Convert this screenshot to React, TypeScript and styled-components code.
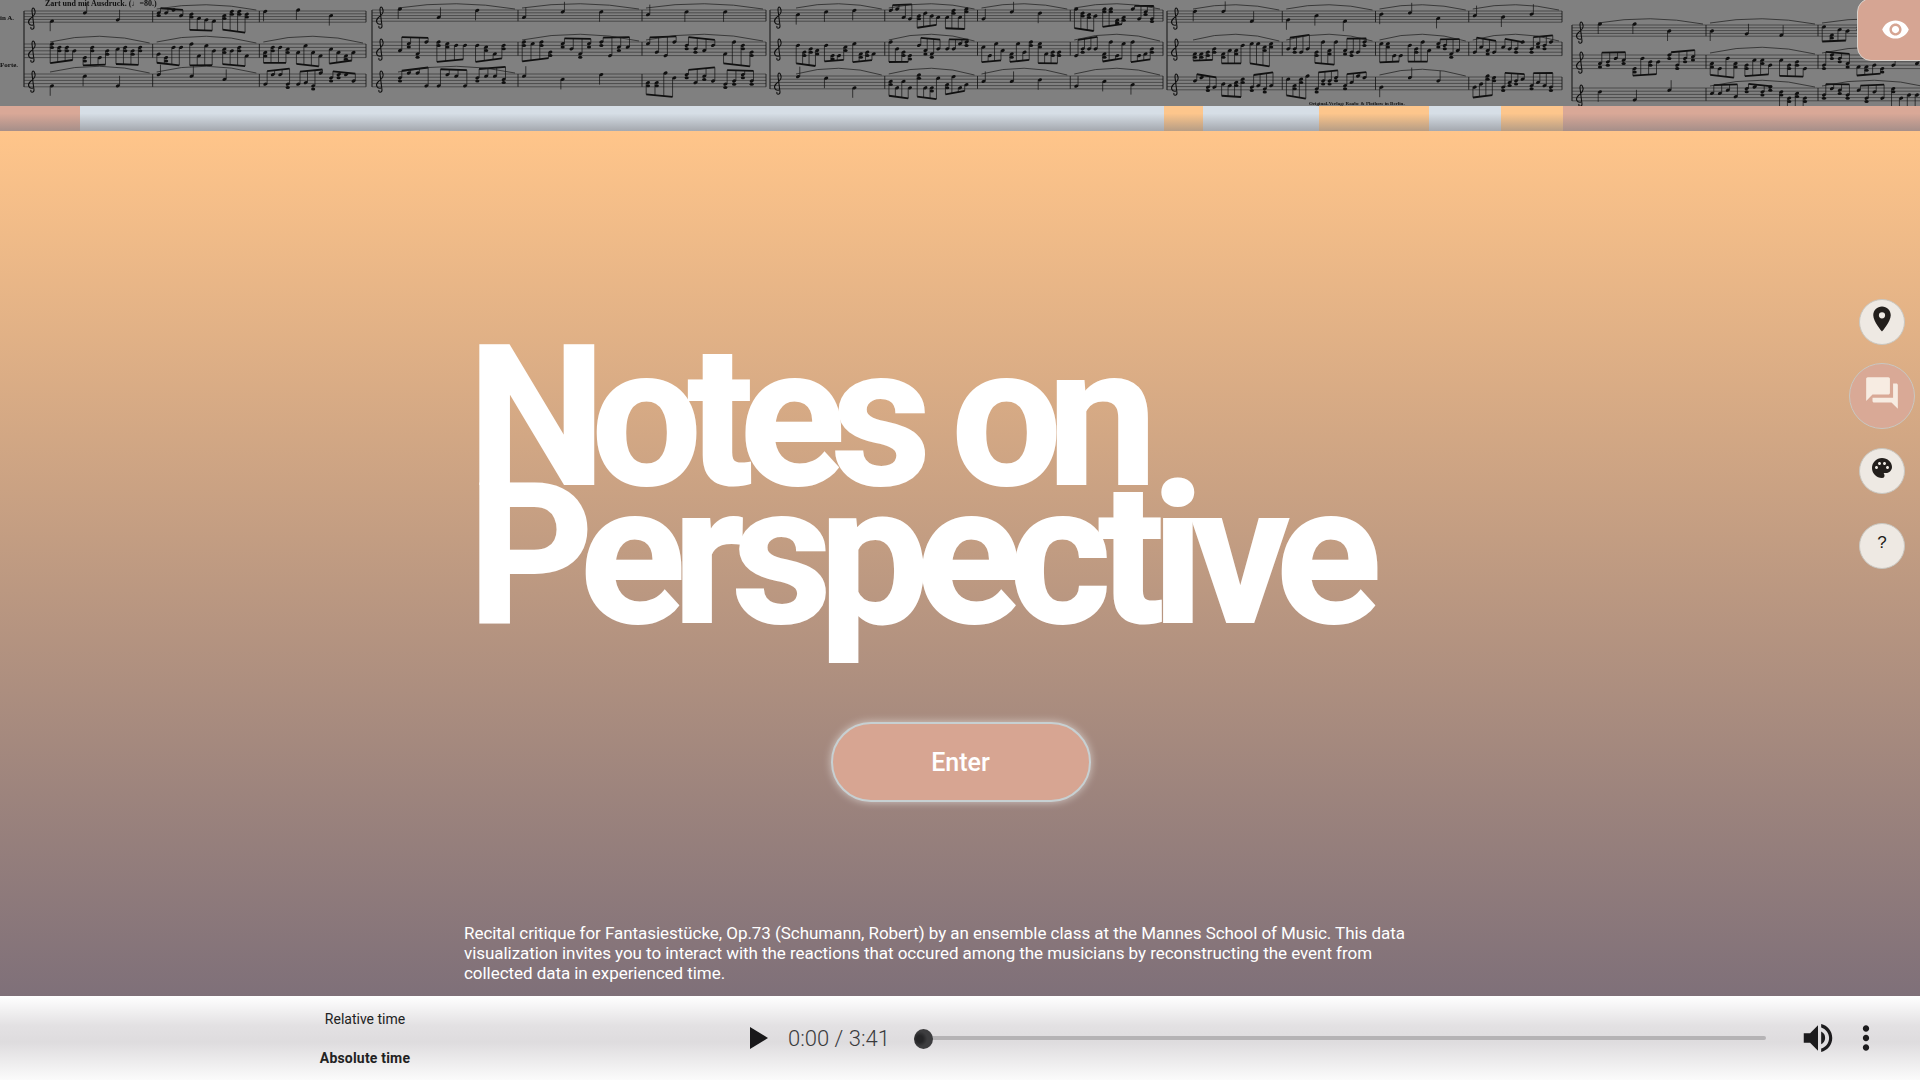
import React from "react";
import styled, { createGlobalStyle } from "styled-components";
import {
  MdLocationOn,
  MdMoreVert,
  MdPalette,
  MdQuestionAnswer,
  MdVisibility,
  MdVolumeUp,
} from "react-icons/md";

const GlobalStyle = createGlobalStyle`
  html, body {
    margin: 0;
    padding: 0;
    overflow: hidden;
  }
  body {
    font-family: Roboto, "Liberation Sans", sans-serif;
  }
`;

const Page = styled.div`
  position: relative;
  display: flex;
  flex-direction: column;
  width: 1920px;
  height: 1080px;
  overflow: hidden;
`;

const ScoreBand = styled.div`
  height: 106px;
  background: #808080;
  overflow: hidden;
  svg {
    display: block;
    filter: blur(0.4px);
  }
`;

const Timeline = styled.div`
  display: flex;
  height: 26px;
  background: #ffc58a;
`;

const toneColors: Record<string, string> = {
  pink: "#d9a897",
  blue: "#d6dee6",
  orange: "#fdc68c",
};

const Segment = styled.div<{ $width: number; $tone: string }>`
  width: ${(p) => p.$width}px;
  height: 25px;
  background: linear-gradient(
      to bottom,
      rgba(120, 120, 125, 0) 30%,
      rgba(120, 120, 125, 0.5) 96%
    ),
    ${(p) => toneColors[p.$tone]};
`;

const Stage = styled.main`
  display: flex;
  flex: 1;
  flex-direction: column;
  background: linear-gradient(to bottom, #ffc58a 0%, #7f7079 100%);
`;

const Title = styled.h1`
  margin: 217px 0 0 468px;
  color: #fff;
  font-family: Roboto, sans-serif;
  font-size: 195px;
  font-weight: 700;
  line-height: 138px;
  white-space: nowrap;
  -webkit-text-stroke: 2px #fff;
`;

const TitleLine = styled.span<{ $tracking: number }>`
  display: block;
  letter-spacing: ${(p) => p.$tracking}px;
`;

const EnterButton = styled.button`
  align-self: center;
  width: 260px;
  height: 80px;
  margin: 97px 0 0 1px;
  padding-top: 2px;
  border: 2px solid #c7d0d2;
  border-radius: 40px;
  background: #d7a592;
  box-shadow: 0 0 8px rgba(255, 255, 255, 0.55);
  color: #fff;
  font-family: Roboto, sans-serif;
  font-size: 25px;
  font-weight: 500;
`;

const Blurb = styled.p`
  width: 960px;
  margin: 121px 0 0 464px;
  color: #fff;
  font-family: Roboto, sans-serif;
  font-size: 17px;
  font-weight: 400;
  line-height: 20px;
  letter-spacing: -0.05px;
`;

const EyeTab = styled.button`
  position: absolute;
  top: -2px;
  right: -14px;
  display: flex;
  align-items: center;
  justify-content: center;
  width: 77px;
  height: 63px;
  padding: 0;
  border: 1px solid #d9d3cd;
  border-radius: 14px;
  background: #d6a593;
  color: #fff;
  font-size: 29px;
`;

const SideRail = styled.nav`
  position: absolute;
  top: 299px;
  right: 6px;
  display: flex;
  flex-direction: column;
  align-items: center;
  width: 64px;
`;

const RoundButton = styled.button<{ $active?: boolean; $gap: number; $icon: number }>`
  display: flex;
  align-items: center;
  justify-content: center;
  box-sizing: border-box;
  width: ${(p) => (p.$active ? 66 : 46)}px;
  height: ${(p) => (p.$active ? 66 : 46)}px;
  margin-top: ${(p) => p.$gap}px;
  padding: 0 0 6px;
  border: 1px solid #c9c7c1;
  border-radius: 50%;
  background: ${(p) => (p.$active ? "#d9a996" : "#eee9e3")};
  color: ${(p) => (p.$active ? "#f7ece2" : "#231f1c")};
  font-size: ${(p) => p.$icon}px;
  font-family: "Liberation Sans", sans-serif;
`;

const HelpMark = styled.span`
  font-size: 17px;
  font-weight: 400;
  color: #1e1b19;
`;

const PlayerBar = styled.footer`
  display: flex;
  align-items: center;
  height: 84px;
  padding: 0 35px 0 320px;
  background: linear-gradient(
    to bottom,
    #ffffff 0%,
    #e3e1e3 35%,
    #dedcde 55%,
    #fbfbfb 100%
  );
  box-sizing: border-box;
`;

const ModeColumn = styled.div`
  display: flex;
  flex-direction: column;
  align-items: center;
  gap: 21px;
  width: 90px;
  color: #222;
  font-size: 14px;
  line-height: 18px;
`;

const Mode = styled.span<{ $selected?: boolean }>`
  font-weight: ${(p) => (p.$selected ? 700 : 400)};
  letter-spacing: ${(p) => (p.$selected ? 0.2 : 0)}px;
  white-space: nowrap;
`;

const PlayIcon = styled.svg`
  width: 18px;
  height: 22px;
  margin-left: 340px;
  fill: #19181a;
`;

const TimeLabel = styled.span`
  margin-left: 20px;
  color: #3a3a3c;
  font-size: 22px;
  font-weight: 300;
`;

const Slider = styled.div`
  position: relative;
  flex: 1;
  height: 4px;
  margin: 0 33px 0 24px;
  border-radius: 2px;
  background: #b5b3b5;
`;

const Thumb = styled.span`
  position: absolute;
  top: -7px;
  left: 0;
  width: 19px;
  height: 20px;
  border-radius: 50%;
  background: radial-gradient(circle at 30% 50%, #252527 20%, #3d3d3f 45%);
`;

const IconSlot = styled.span<{ $size: number; $gap?: number }>`
  display: flex;
  margin-left: ${(p) => p.$gap ?? 0}px;
  color: #1c1b1d;
  font-size: ${(p) => p.$size}px;
`;

const segments = [
  { width: 80, tone: "pink" },
  { width: 1084, tone: "blue" },
  { width: 39, tone: "orange" },
  { width: 116, tone: "blue" },
  { width: 110, tone: "orange" },
  { width: 72, tone: "blue" },
  { width: 62, tone: "orange" },
  { width: 357, tone: "pink" },
];

// sheet music: left, right, staff tops, bars per system
const systems = [
  { x1: 24, x2: 366, tops: [11, 44, 74], bars: 3 },
  { x1: 372, x2: 766, tops: [10, 42, 74], bars: 3 },
  { x1: 770, x2: 1163, tops: [10, 42, 76], bars: 4 },
  { x1: 1167, x2: 1562, tops: [11, 42, 77], bars: 4 },
  { x1: 1572, x2: 1930, tops: [25, 55, 88], bars: 3 },
];
const lineGaps = [2.8, 3.4, 3.2];

const Score = () => {
  let seed = 11;
  const rand = () => {
    seed = (seed * 16807) % 2147483647;
    return (seed % 1000) / 1000;
  };
  const ink = "#101010";
  const parts: React.ReactNode[] = [];
  let k = 0;

  systems.forEach((sys) => {
    parts.push(
      <line
        key={k++}
        x1={sys.x1}
        x2={sys.x1}
        y1={sys.tops[0]}
        y2={sys.tops[2] + 13}
        stroke={ink}
        strokeWidth={1}
      />
    );
    sys.tops.forEach((top, staffIdx) => {
      const gap = lineGaps[staffIdx];
      for (let l = 0; l < 5; l++) {
        parts.push(
          <line
            key={k++}
            x1={sys.x1}
            x2={sys.x2}
            y1={top + l * gap}
            y2={top + l * gap}
            stroke="#262626"
            strokeWidth={0.6}
          />
        );
      }
      parts.push(
        <path
          key={k++}
          d={`M${sys.x1 + 9} ${top + 14}c-4 1-6-3-3-6s6-4 5-8-3-4-3 0l2 16c0 3-4 3-3 0`}
          fill="none"
          stroke={ink}
          strokeWidth={1.1}
        />
      );
      const barW = (sys.x2 - sys.x1 - 22) / sys.bars;
      for (let b = 0; b < sys.bars; b++) {
        const bx = sys.x1 + 22 + b * barW;
        parts.push(
          <line
            key={k++}
            x1={bx + barW}
            x2={bx + barW}
            y1={top}
            y2={top + gap * 4}
            stroke={ink}
            strokeWidth={0.8}
          />
        );
        const sparse = staffIdx === 0 ? rand() > 0.2 : staffIdx === 2 ? rand() > 0.5 : false;
        const groups = 3;
        for (let g = 0; g < groups; g++) {
          const gx = bx + 6 + (g * (barW - 8)) / groups;
          const count = sparse ? 1 : 4;
          const step = (barW - 8) / groups / 4.4;
          const stemUp = rand() > 0.5;
          const slope = (rand() - 0.5) * 7;
          const beamY = top + (stemUp ? -5 : gap * 4 + 5) + rand() * 3;
          for (let n = 0; n < count; n++) {
            const nx = gx + n * step;
            const ny = top - 1 + Math.floor(rand() * 9) * (gap / 2) + (staffIdx === 1 ? 1 : 0);
            parts.push(
              <ellipse
                key={k++}
                cx={nx}
                cy={ny}
                rx={2.1}
                ry={1.5}
                fill={ink}
                transform={`rotate(-22 ${nx} ${ny})`}
              />
            );
            if (rand() > 0.55 && !sparse) {
              parts.push(
                <ellipse key={k++} cx={nx} cy={ny + gap} rx={2.1} ry={1.5} fill={ink} />
              );
            }
            const sx = stemUp ? nx + 1.8 : nx - 1.8;
            const end = sparse ? ny + (stemUp ? -10 : 10) : beamY + (slope * n) / 3;
            parts.push(
              <line
                key={k++}
                x1={sx}
                x2={sx}
                y1={ny}
                y2={end}
                stroke={ink}
                strokeWidth={0.7}
              />
            );
          }
          if (!sparse) {
            const sx = stemUp ? 1.8 : -1.8;
            parts.push(
              <line
                key={k++}
                x1={gx + sx}
                x2={gx + 3 * step + sx}
                y1={beamY}
                y2={beamY + slope}
                stroke={ink}
                strokeWidth={1.8}
              />
            );
          }
        }
        if (rand() > 0.35) {
          const lift = staffIdx === 0 ? 11 : 14;
          parts.push(
            <path
              key={k++}
              d={`M${bx + 4} ${top - 2}Q${bx + barW / 2} ${top - lift} ${bx + barW - 3} ${top - 1}`}
              fill="none"
              stroke="#1a1a1a"
              strokeWidth={0.7}
            />
          );
        }
      }
    });
  });

  return (
    <svg width="1920" height="106" viewBox="0 0 1920 106">
      {parts}
      <text x="45" y="6" fontFamily="Liberation Serif, serif" fontSize="8" fontWeight="700" fill={ink}>
        Zart und mit Ausdruck. (♩=80.)
      </text>
      <text x="0" y="20" fontFamily="Liberation Serif, serif" fontSize="7" fontWeight="700" fill={ink}>
        in A.
      </text>
      <text x="0" y="67" fontFamily="Liberation Serif, serif" fontSize="7" fontWeight="700" fill={ink}>
        Forte.
      </text>
      <text x="1309" y="105" fontFamily="Liberation Serif, serif" fontSize="5" fontWeight="700" fill={ink}>
        Original-Verlag: Raabe &amp; Plothow in Berlin.
      </text>
    </svg>
  );
};

const App = () => {
  return (
    <Page>
      <GlobalStyle />
      <ScoreBand>
        <Score />
      </ScoreBand>
      <Timeline>
        {segments.map((s, i) => (
          <Segment key={i} $width={s.width} $tone={s.tone} />
        ))}
      </Timeline>
      <Stage>
        <Title>
          <TitleLine $tracking={-14}>Notes on</TitleLine>
          <TitleLine $tracking={-12.5}>Perspective</TitleLine>
        </Title>
        <EnterButton>Enter</EnterButton>
        <Blurb>
          Recital critique for Fantasiestücke, Op.73 (Schumann, Robert) by an
          ensemble class at the Mannes School of Music. This data visualization
          invites you to interact with the reactions that occured among the
          musicians by reconstructing the event from collected data in
          experienced time.
        </Blurb>
      </Stage>
      <PlayerBar>
        <ModeColumn>
          <Mode>Relative time</Mode>
          <Mode $selected>Absolute time</Mode>
        </ModeColumn>
        <PlayIcon viewBox="0 0 18 22">
          <path d="M0 0L18 11L0 22Z" />
        </PlayIcon>
        <TimeLabel>0:00 / 3:41</TimeLabel>
        <Slider>
          <Thumb />
        </Slider>
        <IconSlot $size={38}>
          <MdVolumeUp />
        </IconSlot>
        <IconSlot $size={38} $gap={10}>
          <MdMoreVert />
        </IconSlot>
      </PlayerBar>
      <EyeTab>
        <MdVisibility />
      </EyeTab>
      <SideRail>
        <RoundButton $gap={0} $icon={30}>
          <MdLocationOn />
        </RoundButton>
        <RoundButton $active $gap={18} $icon={38}>
          <MdQuestionAnswer />
        </RoundButton>
        <RoundButton $gap={19} $icon={24}>
          <MdPalette />
        </RoundButton>
        <RoundButton $gap={29} $icon={24}>
          <HelpMark>?</HelpMark>
        </RoundButton>
      </SideRail>
    </Page>
  );
};

export default App;
